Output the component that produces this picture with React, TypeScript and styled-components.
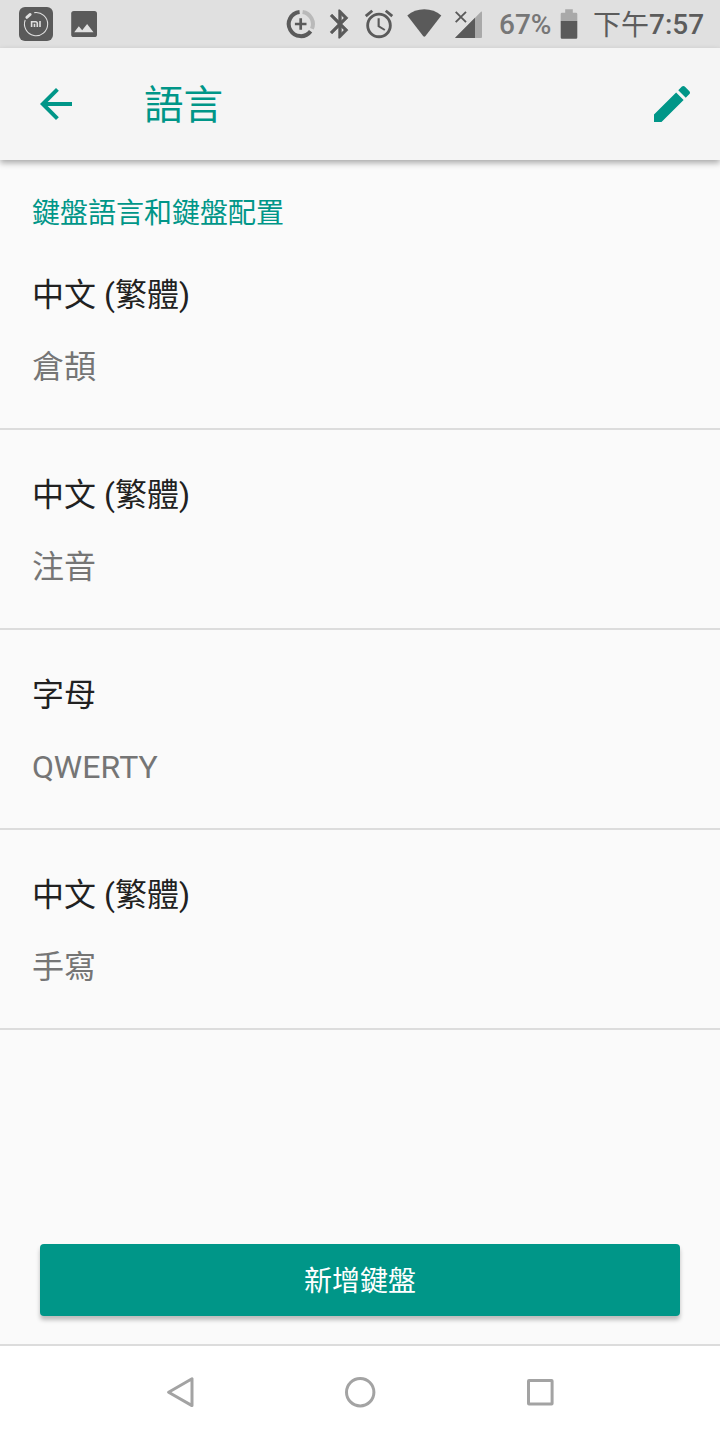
import React from "react";
import styled, { createGlobalStyle } from "styled-components";

const teal = "#009688";
const statusInk = "#5a5a5a";
const statusFaint = "#a9a9a9";

const GlobalStyle = createGlobalStyle`
  *, *::before, *::after { box-sizing: border-box; }
  body {
    margin: 0;
    background: #fafafa;
    font-family: Roboto, "Noto Sans CJK TC", sans-serif;
  }
`;

const Screen = styled.div`
  width: 720px;
  height: 1440px;
  display: flex;
  flex-direction: column;
  background: #fafafa;
  overflow: hidden;
`;

const StatusBar = styled.header`
  height: 48px;
  flex: none;
  display: flex;
  justify-content: space-between;
  align-items: center;
  padding: 0 16px 0 18px;
  background: #e0e0e0;
`;

const StatusGroup = styled.div`
  display: flex;
  align-items: center;
  height: 48px;
`;

const StatusIcon = styled.svg<{ $gap?: number }>`
  display: block;
  flex: none;
  margin-left: ${({ $gap = 0 }) => $gap}px;
`;

const BatteryLevel = styled.span`
  width: 52px;
  margin-left: 16px;
  font-size: 28px;
  font-weight: 500;
  line-height: 48px;
  color: #777777;
  white-space: nowrap;
  padding-top: 2px;
`;

const Clock = styled.time`
  display: flex;
  width: 111px;
  margin-left: 15px;
  padding-top: 2px;
  font-size: 28px;
  font-weight: 500;
  line-height: 48px;
  color: #5c5c5c;
  white-space: nowrap;
`;

const DayPart = styled.span`
  height: 48px;
  margin-top: -1px;
  font-family: "Noto Sans CJK TC", sans-serif;
  font-weight: 400;
  line-height: 46px;
`;

const AppBar = styled.div`
  position: relative;
  height: 112px;
  flex: none;
  display: flex;
  align-items: center;
  padding: 0 24px 0 32px;
  background: #f5f5f5;
  box-shadow: 0 3px 6px rgba(0, 0, 0, 0.32);
`;

const IconButton = styled.button`
  display: block;
  width: 48px;
  height: 48px;
  padding: 0;
  border: 0;
  background: none;
  color: ${teal};
`;

const Title = styled.h1`
  flex: 1;
  margin: 0 0 0 64px;
  padding-top: 4px;
  font-size: 39.5px;
  font-weight: 400;
  line-height: 56px;
  color: ${teal};
`;

const Content = styled.main`
  flex: 1;
  display: flex;
  flex-direction: column;
`;

const SectionTitle = styled.h2`
  height: 70px;
  margin: 0;
  padding: 34px 32px 0;
  font-size: 28px;
  font-weight: 400;
  line-height: 40px;
  color: ${teal};
`;

const KeyboardRow = styled.section`
  height: 200px;
  padding: 41px 32px 0;
  border-bottom: 2px solid #dcdcdc;
`;

const Language = styled.div`
  font-size: 32px;
  line-height: 48px;
  color: #212121;
`;

const Layout = styled.div`
  margin-top: 24px;
  font-size: 32px;
  line-height: 48px;
  letter-spacing: 0.1px;
  color: #757575;
`;

const Footer = styled.div`
  margin-top: auto;
  padding: 0 40px 28px;
  border-bottom: 2px solid #dcdcdc;
`;

const AddButton = styled.button`
  display: block;
  width: 100%;
  height: 72px;
  padding: 4px 0 0;
  border: 0;
  border-radius: 4px;
  background: ${teal};
  box-shadow: 0 4px 4px rgba(0, 0, 0, 0.25);
  font: 400 28px/68px Roboto, "Noto Sans CJK TC", sans-serif;
  color: #ffffff;
`;

const NavBar = styled.nav`
  height: 94px;
  flex: none;
  display: flex;
  justify-content: center;
  background: #ffffff;
`;

const NavItem = styled.div`
  width: 180px;
  display: flex;
  justify-content: center;
`;

const keyboards = [
  { language: "中文 (繁體)", layout: "倉頡" },
  { language: "中文 (繁體)", layout: "注音" },
  { language: "字母", layout: "QWERTY" },
  { language: "中文 (繁體)", layout: "手寫" },
];

const MiFitIcon = () => (
  <StatusIcon width="36" height="48" viewBox="0 0 36 48">
    <rect x="1" y="7" width="34" height="34" rx="6" fill={statusInk} />
    <path d="M16.3 12.6A11.6 11.6 0 1 1 7.2 20" fill="none" stroke="#e0e0e0" strokeWidth="1.1" />
    <path d="M8.8 17.4l3.4-3" stroke="#e0e0e0" strokeWidth="2.8" strokeLinecap="round" />
    <path d="M13.6 27v-5.2h4q1.7 0 1.7 1.7V27M16.5 23.8V27M22 21.1V27" fill="none" stroke="#e0e0e0" strokeWidth="1.6" />
  </StatusIcon>
);

const PictureIcon = () => (
  <StatusIcon $gap={17} width="26" height="48" viewBox="0 0 26 48">
    <rect x="0.2" y="11" width="25.8" height="26" rx="2.6" fill={statusInk} />
    <path d="M3.2 32.3l4.6-6 3.4 4 4.9-6.3 6.4 8.3z" fill="#e0e0e0" />
  </StatusIcon>
);

const DataSaverIcon = () => (
  <StatusIcon width="30" height="48" viewBox="0 0 30 48">
    <path d="M13.6 12A12.1 12.1 0 1 0 24.6 31.2" fill="none" stroke={statusInk} strokeWidth="4" />
    <path d="M16.6 12A12.1 12.1 0 0 1 25.9 28.8" fill="none" stroke="#b9b9b9" strokeWidth="4" />
    <path d="M14.7 18.2v11.6M8.9 24h11.6" stroke={statusInk} strokeWidth="2.7" />
  </StatusIcon>
);

const BluetoothIcon = () => (
  <StatusIcon $gap={7} width="34" height="34" viewBox="0 0 24 24">
    <path
      fill={statusInk}
      stroke={statusInk}
      strokeWidth=".35"
      d="M17.71 7.71L12 2h-1v7.59L6.41 5 5 6.41 10.59 12 5 17.59 6.41 19 11 14.41V22h1l5.71-5.71-4.3-4.29 4.3-4.29zM13 5.83l1.88 1.88L13 9.59V5.83zm1.88 10.46L13 18.17v-3.76l1.88 1.88z"
    />
  </StatusIcon>
);

const AlarmIcon = () => (
  <StatusIcon $gap={5} width="34" height="34" viewBox="0 0 24 24">
    <path
      fill={statusInk}
      d="M22 5.72l-4.6-3.86-1.29 1.53 4.6 3.86L22 5.72zM7.88 3.39L6.6 1.86 2 5.71l1.29 1.53 4.59-3.85zM12.5 8H11v6l4.75 2.85.75-1.23-4-2.37V8zM12 4c-4.97 0-9 4.03-9 9s4.02 9 9 9a9 9 0 0 0 0-18zm0 16c-3.87 0-7-3.13-7-7s3.13-7 7-7 7 3.13 7 7-3.13 7-7 7z"
    />
  </StatusIcon>
);

const WifiIcon = () => (
  <StatusIcon $gap={11} width="35" height="48" viewBox="0 0 35 48">
    <path d="M.3 15.5C5 11.4 10.8 9.3 17.3 9.3s12.3 2.1 17 6.2L18.5 36q-1.2 1.4-2.4 0z" fill={statusInk} />
  </StatusIcon>
);

const SignalIcon = () => (
  <StatusIcon $gap={13} width="28" height="48" viewBox="0 0 28 48">
    <path d="M0 38L26 11.8Q27 11 27 12.4V37q0 1-1 1z" fill={statusFaint} />
    <path d="M20 17.8V38H.8Q-.2 38 .6 37.2z" fill={statusInk} />
    <path d="M.7 11.8l10.3 10.3M11 11.8L.7 22.1" stroke={statusInk} strokeWidth="1.9" />
  </StatusIcon>
);

const BatteryIcon = () => (
  <StatusIcon $gap={9} width="18" height="48" viewBox="0 0 18 48">
    <path d="M.7 21v-7q0-1.3 1.3-1.3h3.2V9.3h7.6v3.4H16q1.3 0 1.3 1.3v7z" fill={statusFaint} />
    <path d="M.7 21h16.6v16.4q0 1.3-1.3 1.3H2q-1.3 0-1.3-1.3z" fill={statusInk} />
  </StatusIcon>
);

export default function App() {
  return (
    <>
      <GlobalStyle />
      <Screen>
        <StatusBar>
          <StatusGroup>
            <MiFitIcon />
            <PictureIcon />
          </StatusGroup>
          <StatusGroup>
            <DataSaverIcon />
            <BluetoothIcon />
            <AlarmIcon />
            <WifiIcon />
            <SignalIcon />
            <BatteryLevel>67%</BatteryLevel>
            <BatteryIcon />
            <Clock>
              <DayPart>下午</DayPart>7:57
            </Clock>
          </StatusGroup>
        </StatusBar>

        <AppBar>
          <IconButton aria-label="返回">
            <svg width="48" height="48" viewBox="0 0 24 24" fill="currentColor">
              <path d="M20 11H7.83l5.59-5.59L12 4l-8 8 8 8 1.41-1.41L7.83 13H20v-2z" />
            </svg>
          </IconButton>
          <Title>語言</Title>
          <IconButton aria-label="編輯">
            <svg width="48" height="48" viewBox="0 0 24 24" fill="currentColor">
              <path d="M3 17.25V21h3.75L17.81 9.94l-3.75-3.75L3 17.25zM20.71 7.04c.39-.39.39-1.02 0-1.41l-2.34-2.34c-.39-.39-1.02-.39-1.41 0l-1.83 1.83 3.75 3.75 1.83-1.83z" />
            </svg>
          </IconButton>
        </AppBar>

        <Content>
          <SectionTitle>鍵盤語言和鍵盤配置</SectionTitle>
          {keyboards.map((keyboard, index) => (
            <KeyboardRow key={index}>
              <Language>{keyboard.language}</Language>
              <Layout>{keyboard.layout}</Layout>
            </KeyboardRow>
          ))}
          <Footer>
            <AddButton>新增鍵盤</AddButton>
          </Footer>
        </Content>

        <NavBar>
          <NavItem>
            <svg width="32" height="92" viewBox="0 0 32 92">
              <path d="M4.6 46.2L28 32.8v26.8z" fill="none" stroke="#a3a3a3" strokeWidth="3" strokeLinejoin="round" />
            </svg>
          </NavItem>
          <NavItem>
            <svg width="32" height="92" viewBox="0 0 32 92">
              <circle cx="16.2" cy="46.2" r="13.7" fill="none" stroke="#a3a3a3" strokeWidth="3" />
            </svg>
          </NavItem>
          <NavItem>
            <svg width="32" height="92" viewBox="0 0 32 92">
              <rect x="4.5" y="34.5" width="23.6" height="23.6" rx=".5" fill="none" stroke="#a3a3a3" strokeWidth="3" />
            </svg>
          </NavItem>
        </NavBar>
      </Screen>
    </>
  );
}
